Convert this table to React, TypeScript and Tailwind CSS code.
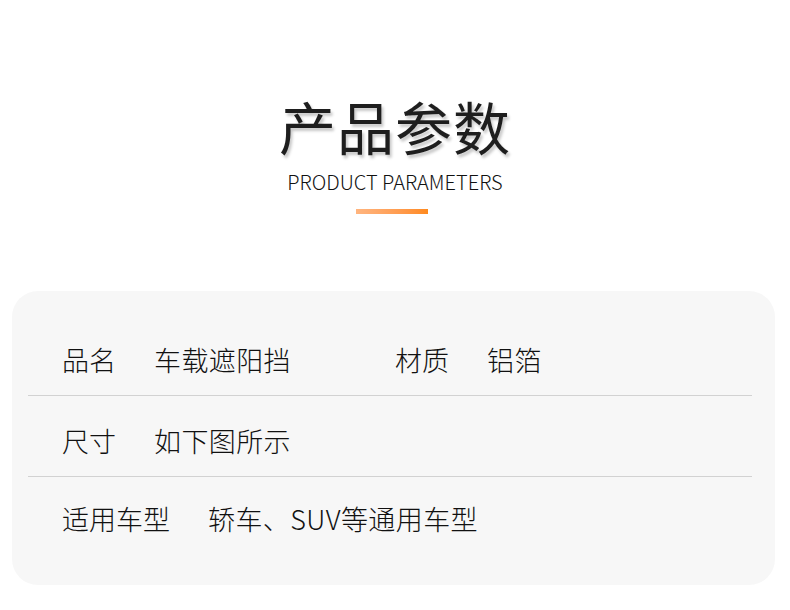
import React from 'react';

const font = { fontFamily: '"Noto Sans CJK SC", "Noto Sans", sans-serif' };

type Cell = { label: string; value: string; width?: string };

const rows: { cells: Cell[]; pad: string }[] = [
  {
    pad: 'pt-[55px] pb-[22px]',
    cells: [
      { label: '品名', value: '车载遮阳挡', width: 'w-[333px]' },
      { label: '材质', value: '铝箔' },
    ],
  },
  { pad: 'pt-[31px] pb-[22px]', cells: [{ label: '尺寸', value: '如下图所示' }] },
  { pad: 'pt-[28px] pb-[53px]', cells: [{ label: '适用车型', value: '轿车、SUV等通用车型' }] },
];

const App: React.FC = () => {
  return (
    <div className="w-[790px] h-[610px] bg-white overflow-hidden" style={font}>
      {/* Heading */}
      <div className="flex flex-col items-center pt-[93px]">
        <h1 className="text-[57px] leading-[64px] font-normal text-[#1e1e1e] tracking-[1px] [text-shadow:2px_3px_3px_rgba(0,0,0,0.22)]">
          产品参数
        </h1>
        <p className="mt-[15px] text-[20px] leading-[20px] font-light text-[#111]">
          PRODUCT PARAMETERS
        </p>
        <div className="mt-[17px] mr-[7px] w-[72px] h-[5px] bg-gradient-to-r from-[#ffb57f] to-[#ff8a1c]" />
      </div>

      {/* Card */}
      <div className="mt-[77px] ml-[12px] w-[763px] h-[294px] rounded-[26px] bg-[#f7f7f7]">
        {rows.map((row, i) => (
          <div
            key={i}
            className={`ml-4 mr-[23px] ${row.pad} ${i < rows.length - 1 ? 'border-b border-[#d2d2d2]' : ''}`}
          >
            <div className="flex pl-[34px] text-[27px] leading-[27px] font-light text-[#111]">
              {row.cells.map((c) => (
                <div key={c.label} className={`flex gap-[38px] ${c.width ?? ''}`}>
                  <span>{c.label}</span>
                  <span className="tracking-[0.4px]">{c.value}</span>
                </div>
              ))}
            </div>
          </div>
        ))}
      </div>
    </div>
  );
};

export default App;
